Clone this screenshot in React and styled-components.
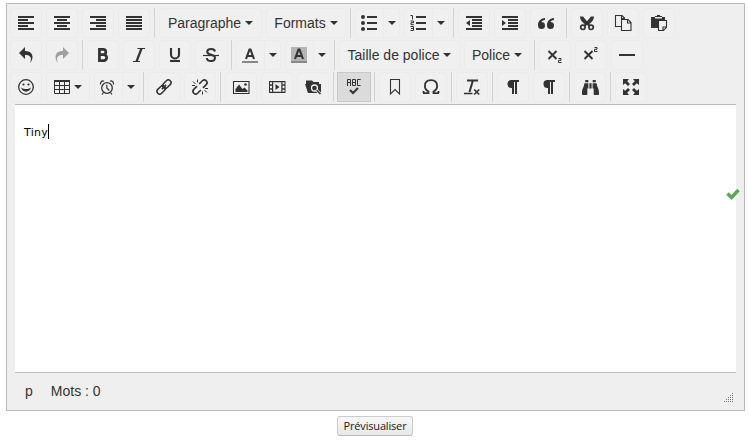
import React from "react";
import styled, { createGlobalStyle, css } from "styled-components";
import { ImUndo2, ImRedo2 } from "react-icons/im";
import { FaBinoculars } from "react-icons/fa";

const GlobalStyle = createGlobalStyle`
  * { box-sizing: border-box; }
  body { margin: 0; background: #fff; color: #333; font-family: "Liberation Sans", Arial, sans-serif; font-size: 14px; }
`;

const Page = styled.main`
  width: 749px;
  height: 443px;
  padding: 3px 4px 0 6px;
  display: flex;
  flex-direction: column;
  overflow: hidden;
`;

const Editor = styled.section`
  position: relative;
  height: 408px;
  flex: none;
  border: 1px solid #bbb;
  background: #efefef;
  display: flex;
  flex-direction: column;
`;

const Toolbars = styled.div`
  display: flex;
  flex-direction: column;
  gap: 2px;
  padding: 4px 3px 2px;
`;

const ToolRow = styled.div`
  display: flex;
  height: 30px;
`;

const Group = styled.div`
  display: flex;
  align-items: center;
  gap: 4px;
  padding-right: 4px;
  & + & {
    border-left: 1px solid #d2d2d2;
    padding-left: 4px;
  }
`;

const Button = styled.button`
  height: 30px;
  width: ${(p) => p.$width || 32}px;
  padding: 0;
  flex: none;
  display: flex;
  align-items: center;
  justify-content: center;
  gap: 4px;
  border: 1px solid #ebebeb;
  border-radius: 4px;
  background: #f0f0f0;
  color: #333;
  font: 14px "Liberation Sans", Arial, sans-serif;
  white-space: nowrap;
  ${(p) => p.$muted && css`color: #a0a0a0;`}
  ${(p) => p.$active && css`
    background: #dbdbdb;
    border-color: #c8c8c8;
    border-radius: 0;
    width: 34px;
    margin: 0 -1px;
  `}
`;

const Split = styled.div`
  display: flex;
  ${Button}:first-child { border-radius: 4px 0 0 4px; padding-right: 2px; }
  ${Button}:last-child { border-radius: 0 4px 4px 0; border-left: 0; }
`;

const Caret = styled.i`
  width: 0;
  height: 0;
  flex: none;
  border: 4px solid transparent;
  border-top-color: #333;
  border-bottom: 0;
`;

const Glyph = styled.svg.attrs((p) => ({ strokeWidth: p.strokeWidth || 1.3 }))`
  width: 16px;
  height: 16px;
  flex: none;
  display: block;
  overflow: visible;
  fill: none;
  stroke: currentColor;
`;

const Canvas = styled.div`
  height: 269px;
  margin: 0 8px;
  padding: 19px 9px;
  border: solid #bbb;
  border-width: 1px 0;
  background: #fff;
  display: flex;
  align-items: flex-start;
  color: #000;
  font: 11px/17px "DejaVu Sans", Verdana, sans-serif;
  letter-spacing: 0.25px;
`;

const Cursor = styled.span`
  width: 1px;
  height: 15px;
  background: #000;
`;

const StatusBar = styled.footer`
  flex: 1;
  padding: 0 10px 2px 18px;
  display: flex;
  align-items: center;
  gap: 18px;
`;

const Grip = styled(Glyph)`
  width: 10px;
  height: 9px;
  margin: 13px 0 0 auto;
  stroke: #777;
  stroke-dasharray: 1 1;
`;

const Valid = styled(Glyph)`
  position: absolute;
  right: 4px;
  top: 184px;
  width: 14px;
  height: 12px;
  color: #57a957;
`;

const Preview = styled.button`
  align-self: center;
  width: 76px;
  height: 20px;
  margin: 5px 0 0 -1px;
  padding: 0 0 2px;
  border: 1px solid #ccc;
  border-bottom-color: #b8b8b8;
  border-radius: 3px;
  background: linear-gradient(#f8f8f8, #e8e8e8);
  color: #222;
  font: 11px "Open Sans", sans-serif;
  letter-spacing: -0.17px;
`;

const solid = { fill: "currentColor", stroke: "none" };

const Lines = ({ rows }) => (
  <Glyph>{rows.map(([x, w], i) => <rect key={i} x={x} y={1 + i * 3} width={w} height="2" {...solid} />)}</Glyph>
);

const Indent = ({ out }) => (
  <Glyph>
    <g {...solid}>
      <path d="M0 1h16v2H0zM6 4h10v2H6zM6 7h10v2H6zM6 10h10v2H6zM0 13h16v2H0z" />
      <path d={out ? "M4 5v6L0 8z" : "M0 5v6l4-3z"} />
    </g>
  </Glyph>
);

const icons = {
  left: <Lines rows={[[0, 16], [0, 10], [0, 16], [0, 10], [0, 16]]} />,
  center: <Lines rows={[[0, 16], [3, 10], [0, 16], [3, 10], [0, 16]]} />,
  right: <Lines rows={[[0, 16], [6, 10], [0, 16], [6, 10], [0, 16]]} />,
  full: <Lines rows={[[0, 16], [0, 16], [0, 16], [0, 16], [0, 16]]} />,
  outdent: <Indent out />,
  indent: <Indent />,
  bullets: <Glyph><g {...solid}><path d="M6 1h10v2H6zM6 7h10v2H6zM6 13h10v2H6z" /><circle cx="2" cy="2" r="2" /><circle cx="2" cy="8" r="2" /><circle cx="2" cy="14" r="2" /></g></Glyph>,
  numbers: <Glyph><path d="M6 1h10v2H6zM6 7h10v2H6zM6 13h10v2H6z" {...solid} /><path d="M.5.5H2.500V4.500M.5 6H3.500v1.700h-2.500v2h2.800M.5 11.500h3v4H.5M1 13.500h2.500" strokeWidth="1" /></Glyph>,
  quote: <Glyph><path d="M3.500 7a3.500 3.500 0 1 1-3.500 3.500C0 6 2.500 3.500 7 3v2C5 5.300 3.700 5.800 3.500 7zM12.500 7A3.500 3.500 0 1 1 9 10.500C9 6 11.500 3.500 16 3v2c-2 .3-3.300.8-3.500 2z" {...solid} /></Glyph>,
  cut: <Glyph strokeWidth="1.700"><path d="M2 1.500c.3 3 1.500 4.700 3.700 6.300h4.600C12.500 6.200 13.700 4.500 14 1.500M3 2l7.500 9M13 2l-7.500 9" strokeWidth="2.100" /><circle cx="3.900" cy="12.300" r="2.200" /><circle cx="12.100" cy="12.300" r="2.200" /></Glyph>,
  copy: <Glyph strokeWidth="1.100"><path d="M6.500 11.500h-6V.5H7L9.500 3v2M6.500.5v3h3M6.500 4.500H13l3 3v8H6.500zM12.500 4.500v3.500H16" /></Glyph>,
  paste: <Glyph><path d="M0 2h4V1h2V0h3v1h2v1h3v3H8v8H0zM4 2v1.500h7V2z" fillRule="evenodd" {...solid} /><path d="M7.500 5.500h8v6.800l-3 3.200h-5zM12 15v-3h3.500" strokeWidth="1.100" /></Glyph>,
  undo: <ImUndo2 size={16} />,
  redo: <ImRedo2 size={16} />,
  bold: <Glyph strokeWidth="2.700"><path d="M4.400 2.400h3.800a2.600 2.600 0 0 1 0 5.200H4.400zM4.400 7.600h4.300a3 3 0 0 1 0 6H4.400z" /></Glyph>,
  italic: <Glyph><path d="M6.500 1.500h7.500M2 14.500h7" strokeWidth="1.200" /><path d="M10.500 1.500l-5 13" strokeWidth="2.200" /></Glyph>,
  underline: <Glyph strokeWidth="2.100"><path d="M4 1v6.500a4 4 0 0 0 8 0V1" /><path d="M3 14h10" /></Glyph>,
  strike: <Glyph><path d="M12 4.500C11.700 2.700 10.200 2 8 2 5.500 2 4.200 3.100 4.200 4.800c0 4 7.800 2 7.800 6 0 1.900-1.600 3.200-4 3.200s-4-1-4.200-3" strokeWidth="2" /><path d="M0 8.500h16" strokeWidth="1.200" /></Glyph>,
  fore: <Glyph><path d="M4 12L7.500 2.500h1L12 12M5.200 9h5.600" strokeWidth="2.100" /><path d="M0 14h16v2H0z" fill="#888" stroke="none" /></Glyph>,
  back: <Glyph><path d="M0 0h16v16H0z" fill="#b4b4b4" stroke="none" /><path d="M4 12L7.500 2.500h1L12 12M5.200 9h5.600" strokeWidth="2.100" /><path d="M0 14h16v2H0z" fill="#888" stroke="none" /></Glyph>,
  sub: <Glyph><path d="M1.500 4l8 8M9.500 4l-8 8" strokeWidth="1.900" /><path d="M11.500 11.500H14v1.800h-2.500v2.200h3" strokeWidth="1" /></Glyph>,
  sup: <Glyph><path d="M1.500 4l8 8M9.500 4l-8 8" strokeWidth="1.900" /><path d="M11.500.5H14v1.800h-2.500v2.200h3" strokeWidth="1" /></Glyph>,
  rule: <Glyph><path d="M0 7h16v2H0z" {...solid} /></Glyph>,
  smile: <Glyph><circle cx="8" cy="8" r="7.300" /><circle cx="5.500" cy="5.500" r="1.100" {...solid} /><circle cx="10.500" cy="5.500" r="1.100" {...solid} /><path d="M3.200 8.500c.4 5.500 9.200 5.500 9.600 0-2.500 2-7 2-9.600 0z" {...solid} /></Glyph>,
  table: <Glyph strokeWidth="1"><path d="M.5 1.500h15v13H.5zM.5 6.500h15M.5 10.500h15M5.500 1.500v13M10.500 1.500v13" /><path d="M0 1h16v2H0z" {...solid} /></Glyph>,
  clock: <Glyph><circle cx="7" cy="9" r="5.300" /><path d="M6.800 5.700V9l2.500 2.500M3.500 13.500l-1.500 2M10.500 13.500l1.500 2M.7 5.500C-.3 3.500 2 1.200 4 2.200M13.300 5.500C14.300 3.500 12 1.200 10 2.200" strokeWidth="1.200" /></Glyph>,
  link: <Glyph strokeWidth="1.500"><g transform="rotate(-45 8 8)"><rect x="-.8" y="5.300" width="9.600" height="5.400" rx="2.700" /><rect x="7.200" y="5.300" width="9.600" height="5.400" rx="2.700" /><path d="M5 8h6" /></g></Glyph>,
  unlink: <Glyph strokeWidth="1.600"><g transform="rotate(-45 8 8)"><path d="M6.500 5.300H1.900a2.700 2.700 0 0 0 0 5.400h4.600M9.500 5.300h4.600a2.700 2.700 0 0 1 0 5.400H9.500" /></g><path d="M1 2.500L3.500 5M5.500.5v3M0 6.500h3M15 13.500L12.500 11M10.500 15.500v-3M16 9.500h-3" strokeWidth="1" /></Glyph>,
  image: <Glyph><path d="M.5 2.500h15.500v12H.5z" strokeWidth="1.100" /><circle cx="12.500" cy="5.500" r="1.300" {...solid} /><path d="M2.500 13V10L6 5.500 9.500 10l2-1.500 3 3V13z" {...solid} /></Glyph>,
  media: <Glyph><path d="M0 2h16.500v12H0zM1 3.300v2h2v-2zm0 3.500v2.400h2V6.800zm0 4v2h2v-2zm12.500-7.500v2h2v-2zm0 3.500v2.400h2V6.800zm0 4v2h2v-2zM4.200 3.300v9.400h8.100V3.300z" fillRule="evenodd" {...solid} /><path d="M6.500 5v6l4-3z" {...solid} /></Glyph>,
  browse: <Glyph><path d="M1 1.500h6l1.500 1.500H14v2h2V14H3L0 5h1z" {...solid} /><circle cx="9.500" cy="9" r="3" fill="#333" stroke="#efefef" /><path d="M11.700 11.200l4 4" stroke="#efefef" strokeWidth="3" /><path d="M11.700 11.200l3.800 3.800" strokeWidth="1.500" /></Glyph>,
  spell: <Glyph><path d="M1.500 7V.5h3V7M1.500 3.500h3M6.500.5h3v6h-3zM6.500 3.500h3M14.700.5h-3.200v6h3.200" strokeWidth="1" /><path d="M4 11l3 3 5-5" strokeWidth="2" /></Glyph>,
  bookmark: <Glyph strokeWidth="1.100"><path d="M3.500.5h9v14.500L8 10.500 3.500 15z" /></Glyph>,
  omega: <Glyph><path d="M0 14.200h5.500v-1.700C2.800 11 1.900 9.100 1.900 6.900 1.900 3.400 4.300 1.200 8 1.200s6.100 2.200 6.100 5.700c0 2.200-.9 4.100-3.600 5.600v1.700H16M.5 12v2M15.500 12v2" strokeWidth="1.800" /></Glyph>,
  clear: <Glyph><path d="M3 1.500h11M8.900 1.500L5.500 13" strokeWidth="2" /><path d="M0 14.500h8.500" strokeWidth="1.500" /><path d="M10.200 10.500l5 5M15.200 10.500l-5 5" strokeWidth="1.700" /></Glyph>,
  para: <Glyph><path d="M6 1h8v2h-2v12h-2V3H9v12H7V9a4 4 0 0 1-1-8z" {...solid} /></Glyph>,
  find: <FaBinoculars size={17} />,
  expand: <Glyph><path d="M0 0h6L4.200 2.200 7 5 5 7 2.200 4.200 0 6zM16 0v6l-2.200-1.800L11 7 9 5l2.800-2.800L10 0zM0 16v-6l2.200 1.800L5 9l2 2-2.800 2.800L6 16zM16 16h-6l1.800-2.200L9 11l2-2 2.800 2.800L16 10z" {...solid} /></Glyph>,
};

const Tool = ({ icon, label, ...rest }) => <Button aria-label={label || icon} {...rest}>{icons[icon]}</Button>;
const Menu = ({ text, width }) => <Button $width={width}>{text}<Caret /></Button>;
const SplitTool = ({ icon }) => (
  <Split><Tool icon={icon} $width={29} /><Button $width={16} aria-label={icon + " options"}><Caret /></Button></Split>
);

export default function App() {
  return (
    <Page>
      <GlobalStyle />
      <Editor>
        <Toolbars>
          <ToolRow>
            <Group><Tool icon="left" /><Tool icon="center" /><Tool icon="right" /><Tool icon="full" /></Group>
            <Group><Menu text="Paragraphe" width={103} /><Menu text="Formats" width={80} /></Group>
            <Group><SplitTool icon="bullets" /><SplitTool icon="numbers" /></Group>
            <Group><Tool icon="outdent" /><Tool icon="indent" /><Tool icon="quote" /></Group>
            <Group><Tool icon="cut" /><Tool icon="copy" /><Tool icon="paste" /></Group>
          </ToolRow>
          <ToolRow>
            <Group><Tool icon="undo" /><Tool icon="redo" $muted /></Group>
            <Group><Tool icon="bold" /><Tool icon="italic" /><Tool icon="underline" /><Tool icon="strike" /></Group>
            <Group><SplitTool icon="fore" /><SplitTool icon="back" /></Group>
            <Group><Menu text="Taille de police" width={121} /><Menu text="Police" width={66} /></Group>
            <Group><Tool icon="sub" /><Tool icon="sup" /><Tool icon="rule" /></Group>
          </ToolRow>
          <ToolRow>
            <Group><Tool icon="smile" /><Button $width={44} aria-label="table">{icons.table}<Caret /></Button><SplitTool icon="clock" /></Group>
            <Group><Tool icon="link" /><Tool icon="unlink" /></Group>
            <Group><Tool icon="image" /><Tool icon="media" /><Tool icon="browse" /></Group>
            <Group><Tool icon="spell" $active /></Group>
            <Group><Tool icon="bookmark" /><Tool icon="omega" /></Group>
            <Group><Tool icon="clear" /></Group>
            <Group><Tool icon="para" /><Tool icon="para" /></Group>
            <Group><Tool icon="find" /></Group>
            <Group><Tool icon="expand" /></Group>
          </ToolRow>
        </Toolbars>
        <Canvas>Tiny<Cursor /></Canvas>
        <StatusBar>
          <span>p</span><span>Mots : 0</span>
          <Grip strokeWidth="1"><path d="M8 .5h2M6 2.500h4M4 4.500h6M2 6.500h8M0 8.500h10" /></Grip>
        </StatusBar>
        <Valid strokeWidth="3.400"><path d="M1.500 5.500l4 4 7-7.500" /></Valid>
      </Editor>
      <Preview>Prévisualiser</Preview>
    </Page>
  );
}
